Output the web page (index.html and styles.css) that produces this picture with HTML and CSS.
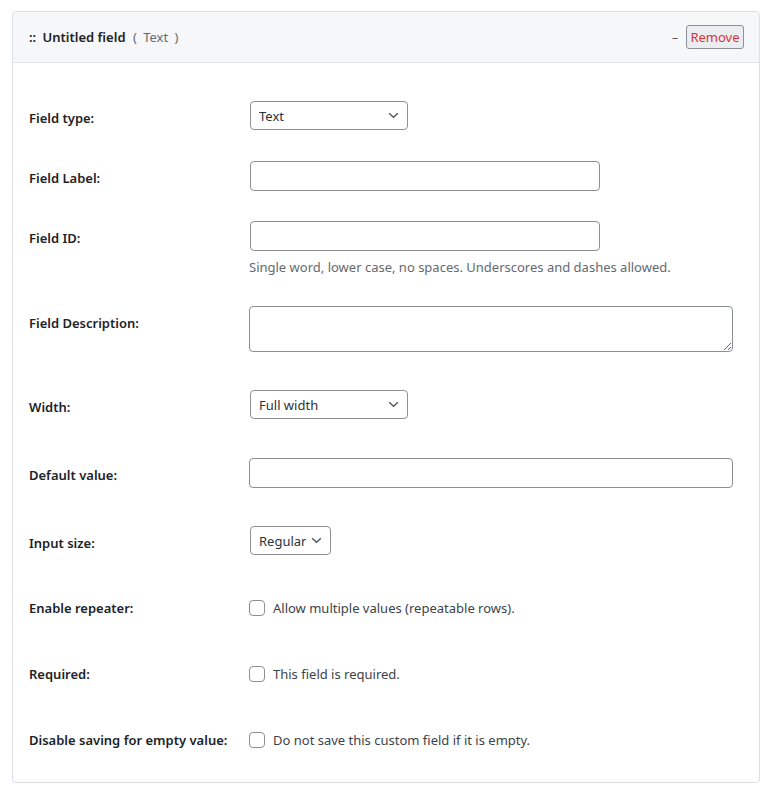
FILE: index.html
```html
<!DOCTYPE html>
<html lang="en">
  <head>
    <meta charset="UTF-8" />
    <meta name="viewport" content="width=device-width, initial-scale=1.0" />
    <title>Untitled field</title>
    <link rel="stylesheet" href="styles.css">
  </head>
  <body>
    <div class="field-card">
      <div class="field-head">
        <div class="field-title">
          <strong><span class="grip">::</span> Untitled field</strong>
          <span class="field-type">( Text )</span>
        </div>
        <div class="field-actions">
          <span class="toggle">&ndash;</span>
          <button type="button" class="btn-remove">Remove</button>
        </div>
      </div>

      <div class="field-body">
        <div class="row">
          <label class="row-label" for="ftype">Field type:</label>
          <div class="row-control">
            <span class="select w-158">
              <select id="ftype"><option>Text</option></select>
              <svg viewBox="0 0 12 8" width="11" height="7"><path d="M1 1.5l5 4.5 5-4.5" fill="none" stroke="#50575e" stroke-width="1.6"/></svg>
            </span>
          </div>
        </div>

        <div class="row">
          <label class="row-label" for="flabel">Field Label:</label>
          <div class="row-control">
            <input type="text" id="flabel" class="text w-350" />
          </div>
        </div>

        <div class="row">
          <label class="row-label" for="fid">Field ID:</label>
          <div class="row-control">
            <input type="text" id="fid" class="text w-350" />
            <p class="hint">Single word, lower case, no spaces. Underscores and dashes allowed.</p>
          </div>
        </div>

        <div class="row row-area">
          <label class="row-label" for="fdesc">Field Description:</label>
          <div class="row-control">
            <textarea id="fdesc" class="area"></textarea>
          </div>
        </div>

        <div class="row loose">
          <label class="row-label" for="fwidth">Width:</label>
          <div class="row-control">
            <span class="select w-158">
              <select id="fwidth"><option>Full width</option></select>
              <svg viewBox="0 0 12 8" width="11" height="7"><path d="M1 1.5l5 4.5 5-4.5" fill="none" stroke="#50575e" stroke-width="1.6"/></svg>
            </span>
          </div>
        </div>

        <div class="row loose">
          <label class="row-label" for="fdefault">Default value:</label>
          <div class="row-control">
            <input type="text" id="fdefault" class="text w-full" />
          </div>
        </div>

        <div class="row loose">
          <label class="row-label" for="fsize">Input size:</label>
          <div class="row-control">
            <span class="select w-81">
              <select id="fsize"><option>Regular</option></select>
              <svg viewBox="0 0 12 8" width="11" height="7"><path d="M1 1.5l5 4.5 5-4.5" fill="none" stroke="#50575e" stroke-width="1.6"/></svg>
            </span>
          </div>
        </div>

        <div class="row check-row">
          <span class="row-label">Enable repeater:</span>
          <label class="check">
            <input type="checkbox" />
            Allow multiple values (repeatable rows).
          </label>
        </div>

        <div class="row check-row">
          <span class="row-label">Required:</span>
          <label class="check">
            <input type="checkbox" />
            This field is required.
          </label>
        </div>

        <div class="row check-row">
          <span class="row-label">Disable saving for empty value:</span>
          <label class="check">
            <input type="checkbox" />
            Do not save this custom field if it is empty.
          </label>
        </div>
      </div>
    </div>
  </body>
</html>
```

FILE: styles.css
```css
* {
  padding: 0;
  margin: 0;
  box-sizing: border-box;
}

body {
  background: #fff;
  padding: 11px 13px 0 12px;
  font-family: "Noto Sans", "Open Sans", sans-serif;
  font-size: 13px;
  color: #1d2327;
}

.field-card {
  border: 1px solid #dcdfe4;
  border-radius: 4px;
  background: #fff;
}

.field-head {
  height: 51px;
  display: flex;
  justify-content: space-between;
  align-items: center;
  padding: 0 15px 0 16px;
  background: #f6f7f9;
  border-bottom: 1px solid #e2e4e8;
  border-radius: 4px 4px 0 0;
}

.field-title strong {
  font-weight: 600;
}

.grip {
  margin-right: 3px;
}

.field-type {
  color: #646970;
  margin-left: 4px;
  word-spacing: 3px;
}

.field-actions {
  display: flex;
  align-items: center;
  gap: 8px;
}

.toggle {
  color: #50575e;
  font-size: 12px;
}

.btn-remove {
  height: 24px;
  width: 58px;
  font-family: inherit;
  font-size: 13px;
  color: #d63638;
  background: #ecedf0;
  border: 1px solid #8c8f94;
  border-radius: 3px;
  cursor: pointer;
}

.field-body {
  padding: 23px 26px 9px 16px;
}

.row {
  display: flex;
  padding: 15px 0;
}

.row-area {
  padding-bottom: 19px;
}

.row.loose {
  padding: 19px 0;
}

.row-label {
  width: 220px;
  flex-shrink: 0;
  padding-top: 8px;
  line-height: 18px;
  font-weight: 600;
  color: #1d2327;
}

.row-control {
  flex: 1;
}

.select {
  position: relative;
  display: block;
  height: 30px;
}

.select select {
  appearance: none;
  width: 100%;
  height: 29px;
  padding: 0 24px 0 8px;
  font-family: inherit;
  font-size: 13px;
  color: #2c3338;
  background: #fff;
  border: 1px solid #8c8f94;
  border-radius: 4px;
  margin-left: 1px;
}

.select svg {
  position: absolute;
  right: 8px;
  top: 11px;
  pointer-events: none;
}

.w-158 {
  width: 158px;
}

.w-81 {
  width: 81px;
}

.text {
  display: block;
  height: 30px;
  padding: 0 8px;
  font-family: inherit;
  font-size: 13px;
  border: 1px solid #8c8f94;
  border-radius: 4px;
  background: #fff;
}

.w-350 {
  width: 350px;
  margin-left: 1px;
}

.w-full {
  width: 100%;
}

.hint {
  margin-top: 7px;
  line-height: 18px;
  color: #646970;
}

.area {
  display: block;
  width: 100%;
  height: 46px;
  border: 1px solid #8c8f94;
  border-radius: 4px;
  font-family: inherit;
  font-size: 13px;
  padding: 6px 8px;
}

.check-row {
  padding: 19px 0;
  align-items: center;
  height: 66px;
}

.check-row .row-label {
  padding-top: 0;
}

.check {
  display: flex;
  align-items: center;
  gap: 8px;
  color: #3c434a;
  line-height: 18px;
}

.check input {
  appearance: none;
  width: 16px;
  height: 16px;
  border: 1px solid #8c8f94;
  border-radius: 4px;
  background: #fff;
}
```
